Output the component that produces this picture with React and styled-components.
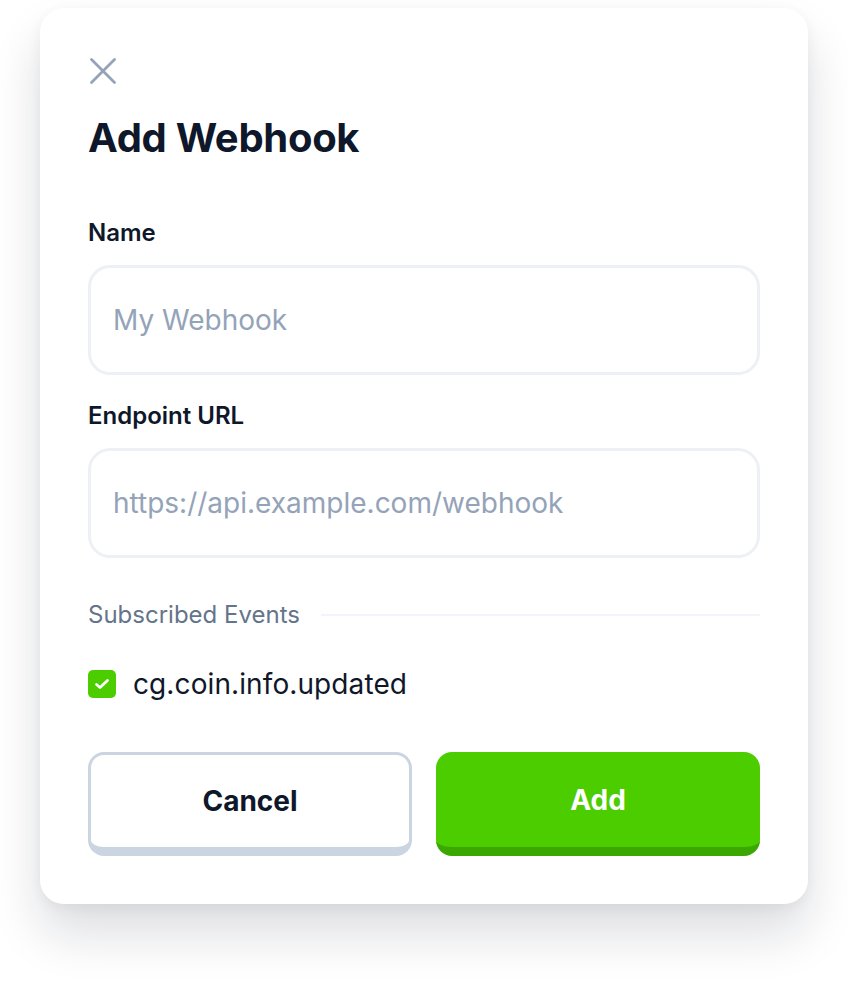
import React from "react";
import styled, { createGlobalStyle } from "styled-components";

const Global = createGlobalStyle`
  html, body { margin: 0; padding: 0; background: #ffffff; }
  body { font-family: Inter, "Noto Sans", "Liberation Sans", sans-serif; -webkit-font-smoothing: antialiased; }
  * { box-sizing: border-box; }
`;

const Page = styled.div`
  padding: 8px 40px 80px;
`;

const Card = styled.div`
  background: #ffffff;
  border-radius: 24px;
  padding: 48px;
  display: flex;
  flex-direction: column;
  box-shadow: 0 30px 50px rgba(15, 23, 42, 0.14), 0 4px 14px rgba(15, 23, 42, 0.05);
`;

const CloseButton = styled.button`
  width: 30px;
  height: 30px;
  padding: 0;
  margin: 0 0 0 1px;
  border: none;
  background: transparent;
  display: flex;
  align-items: center;
  justify-content: flex-start;
  color: #94a3b8;
  cursor: pointer;
`;

const Title = styled.h1`
  margin: 28px 0 0;
  font-size: 40px;
  line-height: 48px;
  font-weight: 700;
  color: #0f172a;
  letter-spacing: -0.3px;
`;

const Field = styled.div`
  display: flex;
  flex-direction: column;
  gap: 18px;
  margin-top: ${(p) => p.$mt}px;
`;

const Label = styled.label`
  font-size: 24px;
  line-height: 28px;
  font-weight: 600;
  color: #0f172a;
`;

const Input = styled.input`
  height: 110px;
  width: 100%;
  border: 3px solid #edf1f5;
  border-radius: 22px;
  padding: 0 22px;
  font-family: inherit;
  font-size: 28px;
  color: #0f172a;
  background: #fff;
  outline: none;
  &::placeholder { color: #94a3b8; }
`;

const SectionHeader = styled.div`
  display: flex;
  align-items: center;
  gap: 21px;
  margin-top: 43px;
`;

const SectionTitle = styled.span`
  font-size: 24px;
  line-height: 28px;
  color: #64748b;
  white-space: nowrap;
`;

const Rule = styled.div`
  flex: 1;
  height: 2px;
  background: #f1f5f9;
`;

const CheckRow = styled.label`
  display: flex;
  align-items: center;
  gap: 17px;
  margin-top: 41px;
  height: 28px;
`;

const CheckBox = styled.span`
  width: 28px;
  height: 28px;
  border-radius: 5px;
  background: #4bcd00;
  display: flex;
  align-items: center;
  justify-content: center;
`;

const CheckText = styled.span`
  font-size: 28px;
  color: #0f172a;
  letter-spacing: 0.1px;
`;

const Actions = styled.div`
  display: grid;
  grid-template-columns: 1fr 1fr;
  gap: 24px;
  margin-top: 54px;
`;

const Button = styled.button`
  height: 104px;
  border-radius: 16px;
  font-family: inherit;
  font-size: 28px;
  font-weight: 700;
  cursor: pointer;
  padding: 0;
  border-style: solid;
  border-width: ${(p) => (p.$primary ? "0 0 9px" : "3px 3px 9px")};
  border-color: ${(p) => (p.$primary ? "#3aa800" : "#cbd5e1")};
  background: ${(p) => (p.$primary ? "#4bcd00" : "#ffffff")};
  color: ${(p) => (p.$primary ? "#ffffff" : "#0f172a")};
`;

export default function App() {
  return (
    <>
      <Global />
      <Page>
        <Card>
          <CloseButton aria-label="Close">
            <svg width="28" height="28" viewBox="0 0 28 28" fill="none">
              <path d="M2.5 2.5L25.5 25.5M25.5 2.5L2.5 25.5" stroke="currentColor" strokeWidth="2.8" strokeLinecap="round" />
            </svg>
          </CloseButton>
          <Title>Add Webhook</Title>
          <Field $mt={57}>
            <Label>Name</Label>
            <Input placeholder="My Webhook" />
          </Field>
          <Field $mt={27}>
            <Label>Endpoint URL</Label>
            <Input placeholder="https://api.example.com/webhook" />
          </Field>
          <SectionHeader>
            <SectionTitle>Subscribed Events</SectionTitle>
            <Rule />
          </SectionHeader>
          <CheckRow>
            <CheckBox>
              <svg width="28" height="28" viewBox="0 0 28 28" fill="none">
                <path d="M8.5 14.5L12 17.5L19.5 10.5" stroke="#fff" strokeWidth="2.8" strokeLinecap="round" strokeLinejoin="round" />
              </svg>
            </CheckBox>
            <CheckText>cg.coin.info.updated</CheckText>
          </CheckRow>
          <Actions>
            <Button>Cancel</Button>
            <Button $primary>Add</Button>
          </Actions>
        </Card>
      </Page>
    </>
  );
}
